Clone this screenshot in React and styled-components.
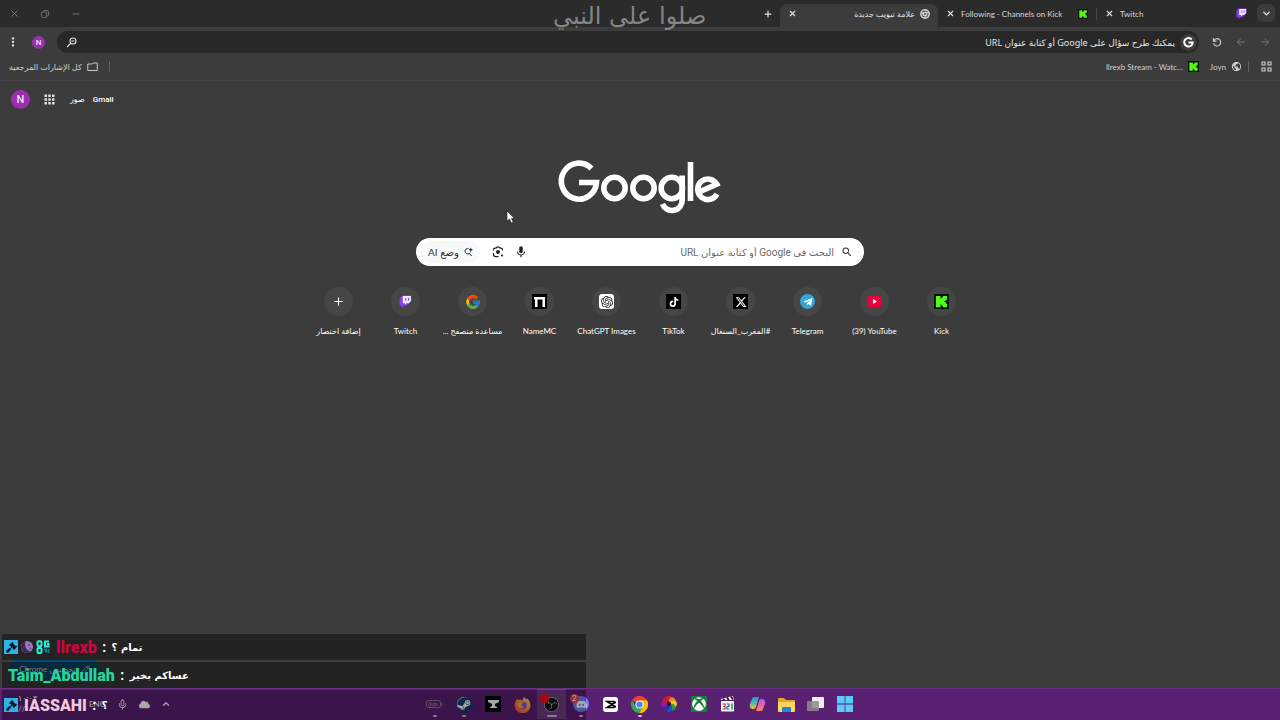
import React from "react";
import styled, { createGlobalStyle } from "styled-components";
import { FaXbox, FaDiscord, FaSteam, FaTelegramPlane, FaTiktok, FaGavel, FaCloud } from "react-icons/fa";
import { FaXTwitter } from "react-icons/fa6";
import { FcGoogle } from "react-icons/fc";
import { SiOpenai, SiObsstudio } from "react-icons/si";
import { MdMic, MdSearch, MdApps, MdMoreVert, MdPublic } from "react-icons/md";
import { LuX, LuPlus, LuMinus, LuChevronDown, LuChevronUp, LuArrowLeft, LuArrowRight, LuMic, LuPencil } from "react-icons/lu";

const sans = `Lato, "Noto Sans", "DejaVu Sans", sans-serif`;

const GlobalStyle = createGlobalStyle`
  * { box-sizing: border-box; }
  html, body, #root { height: 100%; }
  body { margin: 0; background: #3c3c3c; font-family: ${sans}; overflow: hidden; }
  button { font: inherit; color: inherit; background: none; border: 0; padding: 0; cursor: pointer; }
  a { color: inherit; text-decoration: none; }
  svg { display: block; flex: none; }
`;

const Screen = styled.div`
  direction: rtl;
  display: flex;
  flex-direction: column;
  min-height: 100vh;
  position: relative;
  color: #e3e3e3;
`;

const TabStrip = styled.header`
  display: flex;
  height: 27px;
  padding: 4px 5px 0 0;
  background: #2b2b2b;
`;

const TabSearch = styled.button`
  width: 18px;
  height: 18px;
  border-radius: 6px;
  && { background: #3c3c3c; }
  display: grid;
  place-items: center;
  margin-left: 2px;
`;

const Tab = styled.div`
  width: 158px;
  display: flex;
  align-items: center;
  gap: 5px;
  padding: 0 8px 4px 6px;
  color: ${(p) => (p.$active ? "#e3e3e3" : "#d8d8d8")};
  background: ${(p) => (p.$active ? "#3c3c3c" : "transparent")};
  border-radius: 7px 7px 0 0;
  font-size: 8px;
`;

const TabTitle = styled.span`
  flex: 1;
  direction: ${(p) => (p.$ltr ? "ltr" : "rtl")};
  text-align: ${(p) => (p.$ltr ? "left" : "right")};
  white-space: nowrap;
`;

const TabDivider = styled.i`
  width: 1px;
  height: 12px;
  margin-top: 4px;
  background: #474747;
`;

const IconButton = styled.button`
  display: grid;
  place-items: center;
  width: ${(p) => p.$w || 12}px;
  color: ${(p) => p.$color || "#e0e0e0"};
`;

const TabClose = styled(IconButton)`
  margin-right: 3px;
`;

const NewTab = styled(IconButton)`
  padding-bottom: 4px;
  margin-right: 6px;
`;

const WindowControls = styled.div`
  display: flex;
  align-items: center;
  gap: 19px;
  margin-right: auto;
  padding: 0 0 4px 8px;
`;

const Toolbar = styled.nav`
  display: flex;
  align-items: center;
  height: 30px;
  padding: 0 9px 0 8px;
  gap: 12px;
`;

const Omnibox = styled.label`
  flex: 1;
  height: 22px;
  border-radius: 11px;
  background: #282828;
  display: flex;
  align-items: center;
  gap: 5px;
  padding: 0 2px 0 9px;
`;

const Address = styled.input`
  flex: 1;
  min-width: 0;
  border: 0;
  outline: 0;
  background: none;
  padding: 0;
  font: 9px "Noto Sans", "DejaVu Sans", sans-serif;
  &::placeholder { color: #e6e6e6; opacity: 1; }
`;

const GoogleChip = styled.span`
  width: 17px;
  height: 17px;
  border-radius: 50%;
  background: #3c3c3c;
  display: grid;
  place-items: center;
`;

const Avatar = styled.button`
  width: ${(p) => p.$size}px;
  height: ${(p) => p.$size}px;
  border-radius: 50%;
  && { background: #9c2fb0; }
  color: #f3dff6;
  display: grid;
  place-items: center;
  font-family: Roboto, sans-serif;
  font-size: ${(p) => (p.$size > 15 ? 11 : 8)}px;
  font-weight: 500;
`;

const Bookmarks = styled.nav`
  display: flex;
  align-items: center;
  height: 24px;
  padding: 0 8px 4px 9px;
  gap: 11px;
  border-bottom: 1px solid #424242;
  font-size: 8px;
  color: #d0d0d0;
`;

const Bookmark = styled.a`
  display: flex;
  align-items: center;
  gap: 5px;
`;

const BookmarkGroup = styled.div`
  display: flex;
  align-items: center;
  gap: 6px;
`;

const BarDivider = styled.i`
  width: 1px;
  height: 11px;
  background: #636363;
`;

const Spacer = styled.span`
  flex: 1;
`;

const Page = styled.main`
  flex: 1;
  display: flex;
  flex-direction: column;
  align-items: center;
`;

const AccountRow = styled.div`
  align-self: stretch;
  display: flex;
  justify-content: flex-end;
  align-items: center;
  height: 37px;
  padding-left: 11px;
  font-family: Roboto, "Noto Sans", "DejaVu Sans", sans-serif;
  font-size: 8px;
  font-weight: 500;
  color: #fff;
  gap: 8px;
`;

const AppsButton = styled(IconButton)`
  margin: 0 5px;
`;

const Wordmark = styled.svg`
  margin-top: 40px;
`;

const SearchBox = styled.form`
  width: 35%;
  min-width: 448px;
  height: 28px;
  margin-top: 22px;
  border-radius: 14px;
  background: #fff;
  color: #333;
  display: flex;
  align-items: center;
  gap: 12px;
  padding: 0 11px 0 5px;
`;

const SearchField = styled.label`
  flex: 1;
  display: flex;
  align-items: center;
  gap: 7px;
`;

const SearchInput = styled.input`
  flex: 1;
  min-width: 0;
  border: 0;
  outline: 0;
  padding: 0;
  background: none;
  font: 10px Roboto, "Noto Sans", "DejaVu Sans", sans-serif;
  &::placeholder { color: #6b6b6b; opacity: 1; }
`;

const AiMode = styled.button`
  && { background: #f7f9fa; }
  height: 22px;
  border-radius: 11px;
  padding: 0 7px;
  display: flex;
  align-items: center;
  gap: 4px;
  font-size: 10px;
  color: #333;
`;

const Shortcuts = styled.div`
  display: flex;
  margin-top: 21px;
`;

const Shortcut = styled.a`
  width: 67px;
  display: flex;
  flex-direction: column;
  align-items: center;
  gap: 9px;
  font-size: 8px;
  line-height: 12px;
  white-space: nowrap;
  color: #fff;
`;

const Disc = styled.span`
  width: 29px;
  height: 29px;
  border-radius: 50%;
  background: #464646;
  display: grid;
  place-items: center;
`;

const Tile = styled.span`
  width: ${(p) => p.$size || 15}px;
  height: ${(p) => p.$size || 15}px;
  border-radius: ${(p) => p.$radius || 0};
  background: ${(p) => p.$bg || "#000"};
  color: ${(p) => p.$fg || "#fff"};
  display: grid;
  place-items: center;
`;

const Customize = styled.button`
  position: absolute;
  left: 9px;
  bottom: 41px;
  height: 20px;
  width: 91px;
  && { background: #004a77; }
  border-radius: 10px;
  font-size: 8px;
  color: #e8f6ff;
  display: flex;
  justify-content: center;
  align-items: center;
  gap: 5px;
`;

const Taskbar = styled.footer`
  height: 32px;
  background: #5a2072;
  border-top: 1px solid #6b3181;
  display: flex;
  direction: ltr;
  align-items: flex-start;
  justify-content: center;
  position: relative;
`;

const TaskItem = styled.button`
  width: 29px;
  height: 30px;
  display: grid;
  place-items: center;
  position: relative;
  && { background: ${(p) => (p.$active ? "#713c86" : "none")}; }
  &::after {
    content: "";
    position: absolute;
    bottom: 2px;
    left: calc(50% - ${(p) => (p.$active ? 5 : 2)}px);
    width: ${(p) => (p.$active ? 10 : 4)}px;
    height: 2px;
    border-radius: 1px;
    background: ${(p) => (p.$open || p.$active ? "#d5b9df" : "transparent")};
  }
`;

const TaskItems = styled.div`
  display: grid;
  grid-template-columns: repeat(15, 1fr);
  width: 440px;
  justify-items: center;
`;

const Tray = styled.div`
  position: absolute;
  left: 18px;
  height: 30px;
  display: flex;
  align-items: center;
  gap: 11px;
  font-size: 8px;
  line-height: 11px;
  color: #fff;
`;

const TrayText = styled.span`
  width: ${(p) => p.$w}px;
`;

const Badge = styled.span`
  position: absolute;
  left: 3px;
  top: 5px;
  width: 9px;
  height: 9px;
  border-radius: 50%;
  background: #f04a50;
  color: #fff;
  font-size: 8px;
  line-height: 9px;
  text-align: center;
`;

const RecordDot = styled(Badge)`
  background: #ff0a17;
`;

const Chat = styled.section`
  position: absolute;
  left: 0;
  bottom: 0;
  width: 586px;
  direction: ltr;
  display: flex;
  flex-direction: column;
  gap: 2px;
  padding-left: 2px;
  color: #fff;
`;

const Message = styled.p`
  margin: 0;
  height: 26px;
  background: rgba(14, 14, 14, 0.55);
  display: flex;
  align-items: center;
  padding-left: ${(p) => (p.$plain ? 6 : 2)}px;
  gap: 2px;
  font: 700 14px Roboto, "DejaVu Sans", sans-serif;
  white-space: pre;
`;

const LastMessage = styled(Message)`
  height: 30px;
  background: rgba(0, 0, 0, 0.35);
`;

const User = styled.b`
  font-size: 16px;
  color: ${(p) => p.$color};
  margin-left: ${(p) => p.$gap || 0}px;
`;

const ArabicText = styled.span`
  font: 700 10px "DejaVu Sans", sans-serif;
`;

const Overlay = styled.div`
  position: absolute;
  left: 553px;
  top: 0;
  font: 24px/32px "DejaVu Sans", sans-serif;
  color: #858585;
`;

const Pointer = styled.svg`
  position: absolute;
  left: 506px;
  top: 210px;
`;

const KickIcon = ({ size }) => (
  <svg width={size} height={size} viewBox="0 0 16 16">
    <rect width="16" height="16" fill="#071104" />
    <path d="M2 2h5v3h1V3.500h1.500V2H14v4h-1.500v1.500H11v1h1.500V10H14v4H9.500v-1.500H8V11H7v3H2z" fill="#53fc18" />
  </svg>
);

const TwitchIcon = ({ size }) => (
  <svg width={size} height={size} viewBox="0 0 24 24">
    <path d="M6 1 1 6v14h5v4l4-4h4l9-9V1z" fill="#8b3df5" />
    <path d="M7 2h15v9l-4 4h-4l-3 3v-3H7z" fill="#f2eafe" />
    <path d="M12.500 5.500v5M17.500 5.500v5" stroke="#8b3df5" strokeWidth="2" />
  </svg>
);

const ChromeMono = () => (
  <svg width="10" height="10" viewBox="0 0 20 20" fill="none" stroke="#d6d6d6" strokeWidth="3">
    <circle cx="10" cy="10" r="8.300" />
    <circle cx="10" cy="10" r="3.500" />
    <path d="M10 6.500h7.500M7 12 3 5.500M13 12l-4 6.500" strokeWidth="2" />
  </svg>
);

const ChromeColor = () => (
  <svg width="17" height="17" viewBox="0 0 24 24">
    <path d="M12 12 1.600 6A12 12 0 0 1 22.400 6z" fill="#ea4335" />
    <path d="M12 12 22.400 6A12 12 0 0 1 12 24z" fill="#fbbc05" />
    <path d="M12 24A12 12 0 0 1 1.600 6l5.200 9 5.200 3 5-3z" fill="#34a853" />
    <path d="M12 6h10.400A12 12 0 0 1 12 24l5.200-9z" fill="#fbbc05" />
    <circle cx="12" cy="12" r="5.800" fill="#fff" />
    <circle cx="12" cy="12" r="4.400" fill="#4285f4" />
  </svg>
);

const Reload = () => (
  <svg width="10" height="10" viewBox="0 0 22 22" fill="none" stroke="#d0d0d0" strokeWidth="2.400">
    <path d="M3 2v7h7M4 8a8 8 0 1 1-.5 6" />
  </svg>
);

const Restore = () => (
  <svg width="8" height="8" viewBox="0 0 16 16" fill="none" stroke="#7d7d7d" strokeWidth="1.600">
    <rect x="1" y="4" width="10" height="11" rx="2" />
    <path d="M5 4V3q0-2 2-2h5q3 0 3 3v6q0 2-2 2h-1" />
  </svg>
);

const ZoomIcon = () => (
  <svg width="11" height="11" viewBox="0 0 22 22" fill="none" stroke="#e0e0e0" strokeWidth="2.200">
    <circle cx="14" cy="8" r="6" />
    <path d="M9.500 12.500 2 20M11 8h6" />
  </svg>
);

const GridIcon = () => (
  <svg width="11" height="11" viewBox="0 0 22 22" fill="none" stroke="#d4d4d4" strokeWidth="2.200">
    <path d="M2 2h6v6H2zM14 2h6v6h-6zM2 14h6v6H2zM14 14h6v6h-6z" />
  </svg>
);

const FolderIcon = () => (
  <svg width="11" height="10" viewBox="0 0 22 20" fill="none" stroke="#c9c9c9" strokeWidth="2">
    <path d="M1.500 4h9l2-2h8v15h-19z" />
  </svg>
);

const LensIcon = () => (
  <svg width="12" height="12" viewBox="0 0 24 24" fill="none" stroke="#222" strokeWidth="2.500">
    <path d="M3 9V7q0-3 3-3h2l2-2h4l2 2h2q3 0 3 3v2M3 14v3q0 4 4 4h6" />
    <circle cx="12" cy="12" r="4" fill="#222" stroke="none" />
    <circle cx="20" cy="19" r="2.200" fill="#222" stroke="none" />
  </svg>
);

const SparkSearch = () => (
  <svg width="10" height="10" viewBox="0 0 20 20" fill="none" stroke="#222" strokeWidth="2">
    <path d="M11 3H9a5.500 5.500 0 1 0 5.500 8M12.500 13l5 5" />
    <path d="m15.500 1 1.300 3.200L20 5.500l-3.200 1.300-1.300 3.200-1.300-3.200L11 5.500l3.200-1.300z" fill="#222" stroke="none" />
  </svg>
);

const GoogleWordmark = () => (
  <Wordmark width="168" height="58" viewBox="0 0 168 58" fill="none" stroke="#fff" strokeWidth="5.600" role="img" aria-label="Google">
    <path d="M35.500 10.500A17.600 18 0 1 0 40.500 24.500H23" />
    <circle cx="58.500" cy="30" r="10.700" />
    <circle cx="87.500" cy="30" r="10.700" />
    <circle cx="115.800" cy="30" r="10.700" />
    <path d="M126.200 17.500V42A10.200 10.200 0 0 1 106.500 46" />
    <path d="M134.500 4v39" />
    <path d="m143 34 17.800-7.800A10.200 10.300 0 1 0 161 36" />
  </Wordmark>
);

const Battery = () => (
  <svg width="17" height="10" viewBox="0 0 17 10" fill="none" stroke="#8e7d94">
    <rect x=".5" y="1.500" width="14" height="7" rx="2" />
    <path d="M16 4v3M3 4h2v3H3zM7 4h2v3H7zM11 4v3" />
  </svg>
);

const Firefox = () => (
  <svg width="17" height="17" viewBox="0 0 17 17">
    <defs>
      <linearGradient id="ffx" x1="1" y1="0" x2="0" y2="1">
        <stop stopColor="#fff05a" />
        <stop offset=".45" stopColor="#ff9a2e" />
        <stop offset="1" stopColor="#ff3a5f" />
      </linearGradient>
    </defs>
    <path d="M3 3l1.500 1L7 3.500 8 5l2-4.500q1 2 3 3l.5-1Q16.500 6 16.500 9A8 8 0 0 1 .5 9.500Q.5 6 3 3z" fill="url(#ffx)" />
    <circle cx="9" cy="9.300" r="3.600" fill="#8a4af0" />
    <path d="M4 6.500q3-1 6 .5-2.500.5-2.500 2t3 1.500Q8 13 5.500 11.500T4 6.500z" fill="#ffaa36" />
  </svg>
);

const ColorWheel = () => (
  <svg width="16" height="16" viewBox="-8 -8 16 16">
    {["#e3201b", "#f28a18", "#e8d21c", "#2f9e3d", "#1756c4", "#28309c", "#8a1fa0", "#c4153f"].map((c, i) => (
      <circle key={c} cx="0" cy="-4.600" r="3.300" fill={c} transform={`rotate(${i * 45})`} />
    ))}
    <circle r="2.200" fill="#1b1730" />
  </svg>
);

const Clapper = () => (
  <svg width="15" height="16" viewBox="0 0 15 16">
    <path d="M1 3 13 0l1 4H1z" fill="#eee" />
    <path d="m3 3 2 2M7 1.500l2 3M11 .5l2 3" stroke="#222" strokeWidth="1.800" />
    <rect x="1" y="5" width="13" height="10.500" rx="1" fill="#f3f3f3" />
    <path d="M2.500 8H5v2.500H3M5 10v3H2.500" stroke="#d33" fill="none" strokeWidth="1.200" />
    <path d="M6.500 8H9v2.500H7V13h2.500" stroke="#26a" fill="none" strokeWidth="1.200" />
    <path d="M12 7.500v6" stroke="#283" strokeWidth="1.400" />
  </svg>
);

const Copilot = () => (
  <svg width="17" height="16" viewBox="0 0 17 16">
    <defs>
      <linearGradient id="cpa" x2="0" y2="1"><stop stopColor="#2b8df0" /><stop offset=".5" stopColor="#46bfa0" /><stop offset="1" stopColor="#f2c230" /></linearGradient>
      <linearGradient id="cpb" x2="0" y2="1"><stop stopColor="#a55cf0" /><stop offset=".6" stopColor="#f0659a" /><stop offset="1" stopColor="#f78a4a" /></linearGradient>
    </defs>
    <path d="M5 1h5L7 11q-.5 2-2.500 2H3Q0 12 1 8l2-5q.5-2 2-2z" fill="url(#cpa)" />
    <path d="M12 15H7l3-10q.5-2 2.500-2H14q3 1 2 5l-2 5q-.5 2-2 2z" fill="url(#cpb)" />
  </svg>
);

const Explorer = () => (
  <svg width="17" height="15" viewBox="0 0 17 15">
    <path d="M0 2q0-1 1-1h5l2 2h8q1 0 1 1v10H0z" fill="#e9a824" />
    <path d="M0 5h17v9q0 1-1 1H1q-1 0-1-1z" fill="#ffd560" />
    <path d="M4 15v-4q0-1 1-1h7q1 0 1 1v4z" fill="#2783d2" />
  </svg>
);

const TaskView = () => (
  <svg width="17" height="16" viewBox="0 0 17 16">
    <rect x="5" y="1" width="12" height="11" rx="1" fill="#f0eef2" />
    <rect x="0" y="5" width="12" height="10" rx="1" fill="#908a91" opacity=".85" />
  </svg>
);

const WindowsIcon = () => (
  <svg width="16" height="16" viewBox="0 0 16 16" fill="#5ccbfa">
    <path d="M0 0h7.600v7.600H0zM8.400 0H16v7.600H8.400zM0 8.400h7.600V16H0zM8.400 8.400H16V16H8.400z" />
  </svg>
);

const Hammer = () => (
  <Tile $size={14} $bg="#2bb3ea" $fg="#0a1720">
    <FaGavel size={11} />
  </Tile>
);

const MoonBadge = () => (
  <svg width="14" height="14" viewBox="0 0 14 14">
    <circle cx="7" cy="7" r="6" fill="#9a7bb8" />
    <path d="M6 1a6 6 0 1 0 5 10.500A7 7 0 0 1 6 1z" fill="#3d2858" />
    <circle cx="9" cy="5" r="1.200" fill="#6a4b8c" />
    <circle cx="10.500" cy="8.500" r="1" fill="#6a4b8c" />
  </svg>
);

const OgBadge = () => (
  <svg width="14" height="14" viewBox="0 0 14 14" fill="none" stroke="#26f0d4" strokeWidth="2">
    <rect x="1.500" y="1.200" width="4" height="5" rx="1" />
    <path d="M13 1.500H9v5h3.500V4H11" />
    <rect x="1.500" y="8" width="4" height="5" rx="1" />
    <path d="M8 9.500h2v3M12.500 9v4" stroke="#157c8c" />
  </svg>
);

const shortcuts = [
  { label: "Kick", icon: <KickIcon size={15} /> },
  { label: "(39) YouTube", ltr: true, icon: (
    <svg width="15" height="11" viewBox="0 0 15 11"><rect width="15" height="11" rx="3" fill="#e8003a" /><path d="m6 3 4 2.500L6 8z" fill="#fff" /></svg>
  ) },
  { label: "Telegram", icon: <Tile $radius="50%" $bg="#36a5d8"><FaTelegramPlane size={10} /></Tile> },
  { label: "#المغرب_السنغال", icon: <Tile><FaXTwitter size={12} /></Tile> },
  { label: "TikTok", icon: <Tile><FaTiktok size={10} /></Tile> },
  { label: "ChatGPT Images", icon: <Tile $radius="3px" $bg="#fff" $fg="#222"><SiOpenai size={12} /></Tile> },
  { label: "NameMC", icon: <Tile><svg width="11" height="10" viewBox="0 0 11 10"><path d="M0 0h11v10H8.500V2.500h-5V10H1V2.500H0z" fill="#fff" /></svg></Tile> },
  { label: "مساعدة متصفح ...", icon: <FcGoogle size={16} /> },
  { label: "Twitch", icon: <TwitchIcon size={13} /> },
  { label: "إضافة اختصار", icon: <LuPlus size={13} /> },
];

const tasks = [
  { name: "Battery", open: true, icon: <Battery /> },
  { name: "Steam", open: true, icon: <Tile $size={14} $radius="50%" $bg="#fff" $fg="#123f6b"><FaSteam size={16} /></Tile> },
  { name: "Anvil", icon: <Tile $size={16}><svg width="11" height="10" viewBox="0 0 11 10"><path d="M0 1h11v2L7 5v2l2 1v1H2V8l2-1V5L0 3z" fill="#fff" /></svg></Tile> },
  { name: "Firefox", icon: <Firefox /> },
  { name: "OBS Studio", active: true, icon: <Tile $radius="50%" $bg="#111" $fg="#bbb"><SiObsstudio size={15} /></Tile>, dot: true },
  { name: "Discord", open: true, badge: "2", icon: <Tile $size={16} $radius="50%" $bg="#7480ff"><FaDiscord size={11} /></Tile> },
  { name: "CapCut", icon: <Tile $radius="3px" $bg="#fff"><svg width="11" height="9" viewBox="0 0 11 9" fill="none" stroke="#000" strokeWidth="1.500"><path d="M11 2 2 7.500h7V6M11 7 2 1.500h7V3" /></svg></Tile> },
  { name: "Chrome", open: true, icon: <ChromeColor /> },
  { name: "Color picker", icon: <ColorWheel /> },
  { name: "Xbox", icon: <Tile $size={16} $bg="#16803a"><FaXbox size={14} /></Tile> },
  { name: "Media player", icon: <Clapper /> },
  { name: "Copilot", icon: <Copilot /> },
  { name: "File Explorer", icon: <Explorer /> },
  { name: "Task view", icon: <TaskView /> },
  { name: "Start", icon: <WindowsIcon /> },
];

export default function App() {
  return (
    <Screen>
      <GlobalStyle />
      <TabStrip>
        <TabSearch aria-label="Search tabs"><LuChevronDown size={11} strokeWidth={3} /></TabSearch>
        <Tab>
          <TwitchIcon size={11} />
          <TabTitle $ltr>Twitch</TabTitle>
          <IconButton aria-label="Close tab"><LuX size={9} strokeWidth={3} /></IconButton>
        </Tab>
        <TabDivider />
        <Tab>
          <KickIcon size={10} />
          <TabTitle $ltr>Following - Channels on Kick</TabTitle>
          <IconButton aria-label="Close tab"><LuX size={9} strokeWidth={3} /></IconButton>
        </Tab>
        <Tab $active>
          <ChromeMono />
          <TabTitle>علامة تبويب جديدة</TabTitle>
          <TabClose aria-label="Close tab"><LuX size={9} strokeWidth={3} /></TabClose>
        </Tab>
        <NewTab aria-label="New tab"><LuPlus size={10} strokeWidth={3} /></NewTab>
        <WindowControls>
          <IconButton $color="#7d7d7d" aria-label="Minimize"><LuMinus size={10} /></IconButton>
          <IconButton aria-label="Restore"><Restore /></IconButton>
          <IconButton $color="#7d7d7d" aria-label="Close window"><LuX size={11} /></IconButton>
        </WindowControls>
      </TabStrip>

      <Toolbar>
        <IconButton $color="#777" aria-label="Back"><LuArrowRight size={12} /></IconButton>
        <IconButton $color="#777" aria-label="Forward"><LuArrowLeft size={12} /></IconButton>
        <IconButton aria-label="Reload"><Reload /></IconButton>
        <Omnibox>
          <GoogleChip>
            <svg width="11" height="11" viewBox="0 0 22 22" fill="none" stroke="#fff" strokeWidth="4"><path d="M17.500 5A8.500 8.500 0 1 0 19.500 11H11" /></svg>
          </GoogleChip>
          <Address aria-label="Address" placeholder="يمكنك طرح سؤال على Google أو كتابة عنوان URL" />
          <ZoomIcon />
        </Omnibox>
        <Avatar $size={13} aria-label="Profile">N</Avatar>
        <IconButton aria-label="Menu"><MdMoreVert size={14} /></IconButton>
      </Toolbar>

      <Bookmarks>
        <IconButton aria-label="Tab groups"><GridIcon /></IconButton>
        <BookmarkGroup>
          <BarDivider />
          <Bookmark href="#joyn"><MdPublic size={11} />Joyn</Bookmark>
        </BookmarkGroup>
        <Bookmark href="#stream"><KickIcon size={11} /><span dir="ltr">llrexb Stream - Watc...</span></Bookmark>
        <Spacer />
        <BarDivider />
        <Bookmark href="#all"><FolderIcon />كل الإشارات المرجعية</Bookmark>
      </Bookmarks>

      <Page>
        <AccountRow>
          <a href="#gmail">Gmail</a>
          <a href="#images">صور</a>
          <AppsButton $w={14} aria-label="Google apps"><MdApps size={15} /></AppsButton>
          <Avatar $size={19} aria-label="Google account">N</Avatar>
        </AccountRow>
        <GoogleWordmark />
        <SearchBox>
          <SearchField>
            <MdSearch size={12} />
            <SearchInput aria-label="Search" placeholder="البحث في Google أو كتابة عنوان URL" />
          </SearchField>
          <IconButton type="button" $color="#222" aria-label="Voice search"><MdMic size={14} /></IconButton>
          <IconButton type="button" aria-label="Image search"><LensIcon /></IconButton>
          <AiMode type="button"><SparkSearch />وضع AI</AiMode>
        </SearchBox>
        <Shortcuts>
          {shortcuts.map((s) => (
            <Shortcut key={s.label} href="#site">
              <Disc>{s.icon}</Disc>
              <span dir={s.ltr ? "ltr" : undefined}>{s.label}</span>
            </Shortcut>
          ))}
        </Shortcuts>
      </Page>

      <Customize><LuPencil size={9} />تخصيص Chrome</Customize>
      <Taskbar>
        <TaskItems>
          {tasks.map((t) => (
            <TaskItem key={t.name} aria-label={t.name} $open={t.open} $active={t.active}>
              {t.icon}
              {t.badge && <Badge>{t.badge}</Badge>}
              {t.dot && <RecordDot />}
            </TaskItem>
          ))}
        </TaskItems>
        <Tray>
          <TrayText $w={60}>١٠:٠٣<br />//</TrayText>
          <TrayText $w={17}>ENG</TrayText>
          <LuMic size={11} />
          <FaCloud size={11} />
          <LuChevronUp size={10} strokeWidth={3} />
        </Tray>
      </Taskbar>

      <Chat>
        <Message>
          <Hammer /><MoonBadge /><OgBadge />
          <User $color="#c8073f" $gap={4}>llrexb</User> : <ArabicText dir="rtl">تمام ؟</ArabicText>
        </Message>
        <Message $plain>
          <User $color="#27d69b">Taim_Abdullah</User> : <ArabicText dir="rtl">عساكم بخير</ArabicText>
        </Message>
        <LastMessage>
          <Hammer />
          <User $color="#f3c6dc" $gap={4}>IASSAHI</User> : <ArabicText dir="rtl">؟</ArabicText>
        </LastMessage>
      </Chat>

      <Overlay>صلوا على النبي</Overlay>
      <Pointer width="9" height="14" viewBox="0 0 9 14"><path d="M1 1v10l2.500-2 1.700 4 2-1-1.700-3.500H8.500z" fill="#fff" stroke="#222" strokeWidth=".6" /></Pointer>
    </Screen>
  );
}
